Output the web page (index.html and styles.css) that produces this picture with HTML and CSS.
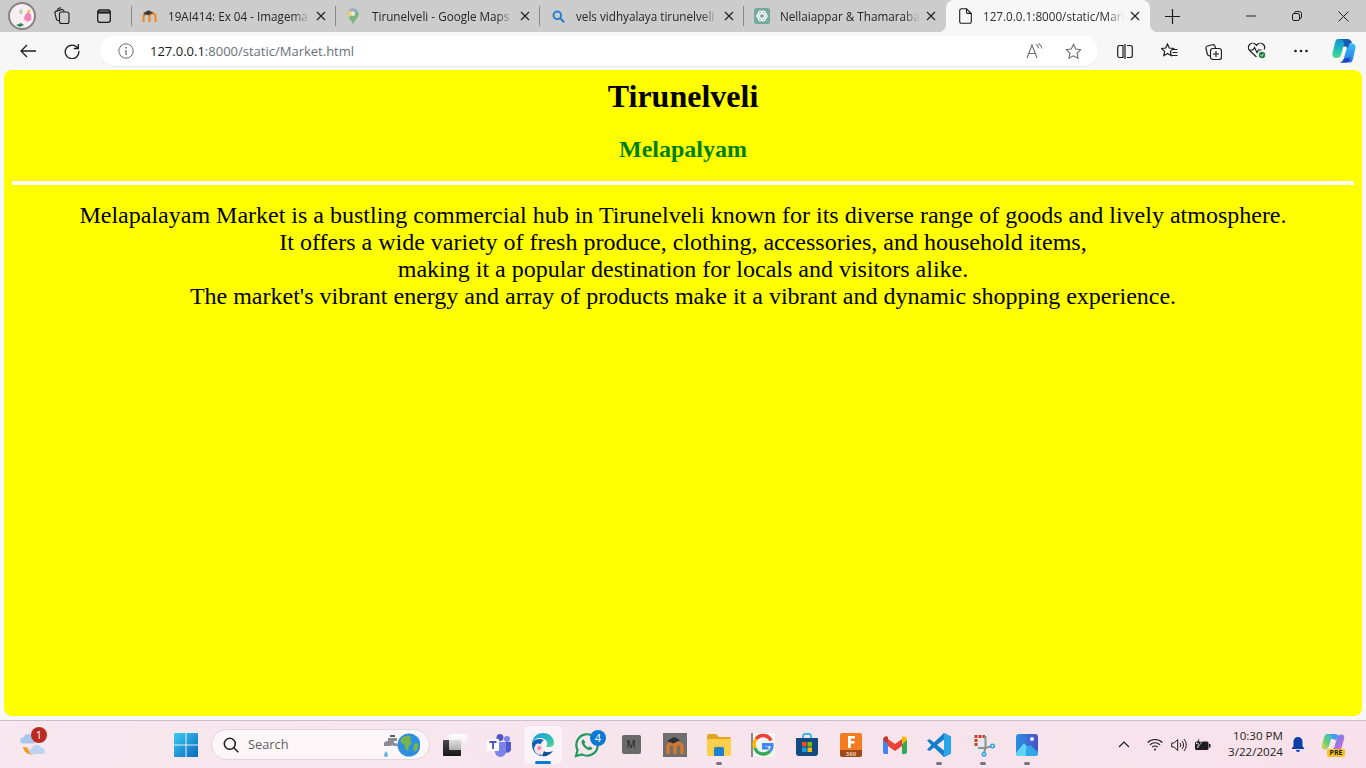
FILE: index.html
```html
<!DOCTYPE html>
<html lang="en">
<head>
<meta charset="utf-8">
<title>Market</title>
<link rel="stylesheet" href="styles.css">
</head>
<body>
<div class="tabstrip">
  <div class="profile">
    <svg width="28" height="28" viewBox="0 0 28 28"><circle cx="14" cy="14" r="13" fill="#fbeef2" stroke="#858585" stroke-width="2"/><path d="M13 6l2 4-2 3-2-3z" fill="#b9cdbb"/><path d="M20 10c3 1 4 5 3 8-2 2-5 2-7-1 0-3 2-6 4-7z" fill="#ef86b5"/><circle cx="21" cy="9" r="1.600" fill="#f4c14c"/><path d="M8 23l5-2 3 2-4 2z" fill="#2d8a52"/></svg>
  </div>
  <div class="strip-btn btn-workspaces">
    <svg width="18" height="18" viewBox="0 0 18 18" fill="none" stroke="#1c1c1c" stroke-width="1.100"><rect x="6.500" y="5" width="9.500" height="11.500" rx="2"/><path d="M6.500 13.500H5a2 2 0 0 1-1.600-1.400L2 6.500a2 2 0 0 1 1.400-2.400l5-1.500a2 2 0 0 1 2.400 1.200L11 5"/><path d="M5 3.800L4.600 3a1.500 1.500 0 0 1 1-1.600l2.600-.6"/></svg>
  </div>
  <div class="strip-btn btn-tabs">
    <svg width="16" height="16" viewBox="0 0 16 16" fill="none" stroke="#1c1c1c" stroke-width="1.300"><rect x="1.700" y="2" width="12.600" height="12.400" rx="2.400"/><path d="M1.700 4.500h12.600" stroke-width="2.200"/></svg>
  </div>
  <div class="tab first">
    <span class="fav"><svg width="17" height="14" viewBox="0 0 17 14"><path d="M1.500 13V7.500a3 3 0 0 1 6 0V13M7.500 13V7.500a3 3 0 0 1 6 0V13" fill="none" stroke="#f08a24" stroke-width="2.200"/><path d="M1 4.200l5.500-3 5 2.500-5.500 2.500z" fill="#3b3b3b"/><path d="M3 4.500v2" stroke="#555" stroke-width="1"/></svg></span>
    <span class="title">19AI414: Ex 04 - Imagema</span>
    <span class="close"><svg width="10" height="10" viewBox="0 0 10 10"><path d="M1 1l8 8M9 1L1 9" stroke="#222" stroke-width="1.200"/></svg></span>
  </div>
  <div class="tab">
    <span class="fav fav-maps"><svg width="12" height="17" viewBox="0 0 12 17"><path d="M6 .5a5.600 5.600 0 0 1 5.600 5.600c0 3.600-4 6-5.600 10.400C4.400 12.100.4 9.700.4 6.100A5.600 5.600 0 0 1 6 .5z" fill="#7db581"/><path d="M6 .5a5.600 5.600 0 0 1 4.300 2L1.700 9.500C.9 8.400.4 7.300.4 6.100A5.600 5.600 0 0 1 6 .5z" fill="#e8cf78"/><path d="M6 .5a5.600 5.600 0 0 1 4.300 2L8 4.500A2.400 2.400 0 0 0 4 3.400L2 1.900A5.600 5.600 0 0 1 6 .5z" fill="#86abe0"/><circle cx="6" cy="6" r="2.100" fill="#e9e9e9"/></svg></span>
    <span class="title">Tirunelveli - Google Maps</span>
    <span class="close"><svg width="10" height="10" viewBox="0 0 10 10"><path d="M1 1l8 8M9 1L1 9" stroke="#222" stroke-width="1.200"/></svg></span>
  </div>
  <div class="tab">
    <span class="fav"><svg width="13" height="13" viewBox="0 0 13 13" fill="none" stroke="#2a7fd0" stroke-width="2"><circle cx="5.300" cy="5.300" r="3.800"/><path d="M8.200 8.200l4 4"/></svg></span>
    <span class="title">vels vidhyalaya tirunelveli -</span>
    <span class="close"><svg width="10" height="10" viewBox="0 0 10 10"><path d="M1 1l8 8M9 1L1 9" stroke="#222" stroke-width="1.200"/></svg></span>
  </div>
  <div class="tab last">
    <span class="fav"><svg width="16" height="16" viewBox="0 0 16 16"><rect width="16" height="16" rx="2.500" fill="#74aa9c"/><g fill="none" stroke="#fff" stroke-width="1"><circle cx="8" cy="8" r="4.800"/><ellipse cx="8" cy="8" rx="5.400" ry="2.300" transform="rotate(60 8 8)"/><ellipse cx="8" cy="8" rx="5.400" ry="2.300" transform="rotate(-60 8 8)"/><ellipse cx="8" cy="8" rx="5.400" ry="2.300"/></g></svg></span>
    <span class="title">Nellaiappar &amp; Thamaraban</span>
    <span class="close"><svg width="10" height="10" viewBox="0 0 10 10"><path d="M1 1l8 8M9 1L1 9" stroke="#222" stroke-width="1.200"/></svg></span>
  </div>
  <div class="tab active">
    <span class="fav"><svg width="13" height="16" viewBox="0 0 13 16" fill="none" stroke="#1c1c1c" stroke-width="1.100"><path d="M2.500.8h5L12.300 5.500v8a1.800 1.800 0 0 1-1.800 1.800h-8A1.800 1.800 0 0 1 .7 13.500V2.600A1.800 1.800 0 0 1 2.500.8z"/><path d="M7.500.8v3.400a1.200 1.200 0 0 0 1.200 1.200h3.600"/></svg></span>
    <span class="title">127.0.0.1:8000/static/Mark</span>
    <span class="close"><svg width="10" height="10" viewBox="0 0 10 10"><path d="M1 1l8 8M9 1L1 9" stroke="#222" stroke-width="1.200"/></svg></span>
  </div>
  <div class="strip-btn btn-new">
    <svg width="15" height="15" viewBox="0 0 15 15"><path d="M7.500 0v15M0 7.500h15" stroke="#1c1c1c" stroke-width="1.200"/></svg>
  </div>
  <div class="window-controls">
    <span class="win-btn"><svg width="10" height="10" viewBox="0 0 10 10"><path d="M0 5h10" stroke="#222" stroke-width="1"/></svg></span>
    <span class="win-btn"><svg width="10" height="10" viewBox="0 0 10 10" fill="none" stroke="#222" stroke-width="1"><rect x=".5" y="2.500" width="7" height="7" rx="1.500"/><path d="M2.500 2.500V2A1.500 1.500 0 0 1 4 .5h3.500A2 2 0 0 1 9.500 2.500V6A1.500 1.500 0 0 1 8 7.500"/></svg></span>
    <span class="win-btn"><svg width="11" height="11" viewBox="0 0 11 11"><path d="M.5.500l10 10M10.500.500l-10 10" stroke="#222" stroke-width="1"/></svg></span>
  </div>
</div>

<div class="toolbar">
  <span class="nav-btn"><svg width="16" height="14" viewBox="0 0 16 14" fill="none" stroke="#1c1c1c" stroke-width="1.300"><path d="M16 7H1M7 1L1 7l6 6"/></svg></span>
  <span class="nav-btn"><svg width="16" height="16" viewBox="0 0 16 16" fill="none" stroke="#1c1c1c" stroke-width="1.300"><path d="M13.800 5.200A6.800 6.800 0 1 0 14.800 8"/><path d="M14.300 1v4.500H9.800"/></svg></span>
  <div class="address">
    <svg class="info" width="16" height="16" viewBox="0 0 16 16" fill="none" stroke="#6b6b6b" stroke-width="1"><circle cx="8" cy="8" r="7.200"/><path d="M8 7v5" stroke-width="1.300"/><circle cx="8" cy="4.700" r=".9" fill="#6b6b6b" stroke="none"/></svg>
    <span class="url"><span class="host">127.0.0.1</span>:8000/static/Market.html</span>
    <svg class="read" width="17" height="16" viewBox="0 0 17 16" fill="none" stroke="#6e6e6e" stroke-width="1.100"><path d="M1 15L6 2l5 13M3 10.500h6"/><path d="M10 1.500c1.500.8 2.400 2 2.600 3.800M12.500 .5c1.900 1.100 3.200 2.800 3.500 5"/></svg>
    <svg class="star" width="17" height="17" viewBox="0 0 17 17" fill="none" stroke="#6e6e6e" stroke-width="1.100"><path d="M8.500 1.300l2.200 4.700 5 .7-3.600 3.500.9 5.100-4.500-2.500L4 15.300l.9-5.100L1.300 6.700l5-.7z"/></svg>
  </div>
  <div class="tools">
    <span class="tool"><svg width="16" height="15" viewBox="0 0 16 15" fill="none" stroke="#1c1c1c" stroke-width="1.200"><path d="M6 1.500H2.500A1.800 1.800 0 0 0 .7 3.300v8.400a1.800 1.800 0 0 0 1.800 1.800H6zM10 1.500h3.500a1.800 1.800 0 0 1 1.800 1.800v8.400a1.800 1.800 0 0 1-1.800 1.800H10M8 0v15"/></svg></span>
    <span class="tool"><svg width="17" height="16" viewBox="0 0 17 16" fill="none" stroke="#1c1c1c" stroke-width="1.150"><path d="M6.500 1l1.800 4 4.200.5-3.100 2.900.8 4.300-3.700-2.200-3.700 2.200.8-4.300L.6 5.500 4.700 5z"/><path d="M11 6.500h5.500M11.500 9.500h5M10.500 12.500h6"/></svg></span>
    <span class="tool"><svg width="17" height="17" viewBox="0 0 17 17" fill="none" stroke="#1c1c1c" stroke-width="1.150"><rect x="5.500" y="5.500" width="11" height="11" rx="2.500"/><path d="M11 8v6M8 11h6"/><path d="M5 13c-1.500 0-2.400-.8-2.700-2L1 5.500A2 2 0 0 1 2.500 3l5-1.300a2 2 0 0 1 2.400 1.300L10.500 5"/></svg></span>
    <span class="tool"><svg width="20" height="18" viewBox="0 0 20 18" fill="none" stroke="#1c1c1c" stroke-width="1.100"><path d="M9.500 15L2.600 8.500a4.200 4.200 0 0 1 0-6 4.300 4.300 0 0 1 6 0l.9.900.9-.9a4.300 4.300 0 0 1 6 0 4.200 4.200 0 0 1 .8 5"/><path d="M2 8h4l1.500-2.500 2.500 5 1.500-2.500h3"/><circle cx="15" cy="13" r="3.800" fill="#1a7f37" stroke="#f7f7f7" stroke-width="1"/><path d="M13.300 13l1.200 1.200 2-2.200" stroke="#fff" stroke-width="1"/></svg></span>
    <span class="tool"><svg width="16" height="4" viewBox="0 0 16 4" fill="#1c1c1c"><circle cx="2.500" cy="2" r="1.300"/><circle cx="8" cy="2" r="1.300"/><circle cx="13.500" cy="2" r="1.300"/></svg></span>
    <span class="tool copilot"><svg width="24" height="24" viewBox="0 0 24 24"><defs><linearGradient id="cpa" x1="0" y1="0" x2="0" y2="1"><stop offset="0" stop-color="#1590d8"/><stop offset=".55" stop-color="#1fc0b4"/><stop offset="1" stop-color="#4bdc8c"/></linearGradient><linearGradient id="cpb" x1="0" y1="0" x2="0" y2="1"><stop offset="0" stop-color="#3cc0f4"/><stop offset=".7" stop-color="#2a8cec"/><stop offset="1" stop-color="#2a5fdc"/></linearGradient></defs><path d="M6 0h10c-3 1-3.500 3-4 5L9 16c-.5 2-2 3-4.500 3C1.500 19 0 17 .5 14L3 4C3.500 1.500 4.500 0 6 0z" fill="url(#cpa)"/><path d="M18 23.500H8c3-1 3.500-3 4-4.500L15 8c.5-2 2-3.500 4.500-3.500 3 0 4.500 2 4 4.500L21 19.500c-.5 2.500-1.500 4-3 4z" fill="url(#cpb)"/><path d="M6 0h9c3 0 4.500 2 5 4-2 0-3 1-3.500 3L16 10c-.5-2-2-2.500-3.500-2.500H11L12 5c.5-2.500-2-5-6-5z" fill="#155bb5"/><path d="M8 23.500h6c2 0 3-1 3.500-3L18 18c-1 1-2.500 1.500-4 1.500h-2c-.5 1.500-1 3-4 4z" fill="#1c3fc8"/></svg></span>
  </div>
</div>

<div class="content">
  <main class="page">
    <h1>Tirunelveli</h1>
    <h2>Melapalyam</h2>
    <hr>
    <p>Melapalayam Market is a bustling commercial hub in Tirunelveli known for its diverse range of goods and lively atmosphere.<br>It offers a wide variety of fresh produce, clothing, accessories, and household items,<br>making it a popular destination for locals and visitors alike.<br>The market's vibrant energy and array of products make it a vibrant and dynamic shopping experience.</p>
  </main>
</div>

<footer class="taskbar">
  <div class="weather">
    <svg width="26" height="26" viewBox="0 0 26 26"><path d="M3 15c1 7 9 10 15 5l-5 .5c-3 0-5-2-5.500-5z" fill="#f39a24"/><path d="M3 11.500a3 3 0 0 1 .5-6 5 5 0 0 1 9.500 0 3 3 0 0 1 0 6z" fill="#a9c7ec"/><path d="M12 22a2.800 2.800 0 0 1 0-5.600 5 5 0 0 1 9.400-.4 3 3 0 0 1 1 6z" fill="#bcd4f0"/></svg>
    <span class="badge badge-red">1</span>
  </div>
  <div class="task-center">
    <span class="slot"><svg width="24" height="24" viewBox="0 0 24 24"><defs><linearGradient id="wn" x1="0" y1="0" x2="1" y2="1"><stop offset="0" stop-color="#3ccbf4"/><stop offset="1" stop-color="#0669bc"/></linearGradient></defs><path d="M0 1a1 1 0 0 1 1-1h10.500v11.500H0zM12.500 0H23a1 1 0 0 1 1 1v10.500H12.500zM0 12.500h11.500V24H1a1 1 0 0 1-1-1zM12.500 12.500H24V23a1 1 0 0 1-1 1H12.500z" fill="url(#wn)"/></svg></span>
    <div class="search">
      <svg width="16" height="16" viewBox="0 0 16 16" fill="none" stroke="#1c1c1c" stroke-width="1.500"><circle cx="6.800" cy="6.800" r="5.500"/><path d="M10.800 10.800l4.500 4.500"/></svg>
      <span class="search-text">Search</span>
      <svg class="search-art" width="38" height="26" viewBox="0 0 38 26"><path d="M6 6h9v3h-3v2c3 0 4 1 4 3h-4c-1-1-3-1-4 0H2v-3c0-1 2-2 4-2z" fill="#8b8b93"/><path d="M8 3h5v2H8z" fill="#5b5b63"/><path d="M4 19c1 2 2 3 2 4a2 2 0 0 1-4 0c0-1 1-2 2-4z" fill="#62b1ef"/><circle cx="27" cy="13" r="11.500" fill="#2d8fe0"/><path d="M21 5c3-2 6-2 8 0l-1 3 2 3-3 3-1 5-3-2v-4l-4-2c-1-3 0-5 2-6zM32 12l4-1c1 4-1 7-3 9l-2-3z" fill="#79b34e"/></svg>
    </div>
    <span class="slot"><svg width="24" height="22" viewBox="0 0 24 22"><defs><linearGradient id="tvd" x1="0" y1="0" x2="0" y2="1"><stop offset="0" stop-color="#4a4a4a"/><stop offset="1" stop-color="#161616"/></linearGradient><linearGradient id="tvl" x1="0" y1="0" x2="0" y2="1"><stop offset="0" stop-color="#ffffff" stop-opacity=".95"/><stop offset="1" stop-color="#e4e4e4" stop-opacity=".72"/></linearGradient></defs><rect x="0" y="6" width="18" height="16" rx="1" fill="url(#tvd)"/><rect x="6" y="0" width="18" height="16" rx="1" fill="url(#tvl)"/></svg></span>
    <span class="slot"><svg width="26" height="24" viewBox="0 0 26 24"><circle cx="21" cy="6" r="3" fill="#7b83eb"/><circle cx="14" cy="4.500" r="3.500" fill="#5059c9"/><path d="M17 9h8v8a4 4 0 0 1-6 2z" fill="#5059c9"/><path d="M8 9h12v9a5.500 5.500 0 0 1-11 1z" fill="#7b83eb"/><rect x="1" y="6" width="12" height="12" rx="1" fill="#fbfbfe"/><path d="M3.500 9h7M7 9v7" stroke="#4b53bc" stroke-width="1.800"/></svg></span>
    <span class="slot slot-active"><svg width="24" height="25" viewBox="0 0 24 25"><defs><linearGradient id="eg" x1="0" y1="0" x2="1" y2="1"><stop offset="0" stop-color="#1b9de2"/><stop offset=".7" stop-color="#35c1b0"/><stop offset="1" stop-color="#5be08a"/></linearGradient></defs><path d="M1 11C2 4 7 1 12 1c6 0 11 4 11 10 0 3-2 4-5 4h-3c2-2 2-7-3-8.500C7 5 3 7 1 11z" fill="url(#eg)"/><path d="M1 11C.5 18 5 24 11 24c-2-2-3-5-2-9 .5-3 2-6 4-7-5-2-10-.5-12 3z" fill="#0c62b5"/><path d="M5 12c2-1 6-1 7 3 1 4-1 7-4 8-3-1-5-4-5-7z" fill="#f8dfe7"/><path d="M7 15c1-1 2-1 3 0 0 2-1 3-2 3s-2-1-1-3z" fill="#ee7fa9"/><path d="M11 24c4 1 8-1 11-5-3 1-7 2-9 0z" fill="#0b4f94"/></svg><span class="active-bar"></span></span>
    <span class="slot whatsapp"><svg width="26" height="26" viewBox="0 0 26 26" fill="none"><path d="M2 24l1.600-6A10.700 10.700 0 1 1 8 22.400z" stroke="#1f9a5c" stroke-width="2.200" fill="#f7e6ee"/><path d="M9 7.500c-1.500 1-2 2.500-1 4.500 1.500 3 3.500 5 6.500 6 2 .5 3.500-.3 4-2l-3-1.700-1.200 1.300c-1.700-.8-3-2-4-4l1.200-1.200L9.500 7.500z" fill="#1f9a5c"/></svg><span class="badge badge-blue">4</span></span>
    <span class="slot"><span class="m-icon">M</span></span>
    <span class="slot"><svg width="24" height="24" viewBox="0 0 24 24"><rect width="24" height="24" fill="#6f6f6f"/><path d="M5 21v-9M12 21v-7a3.500 3.500 0 0 1 7 0v7M5 14a3.500 3.500 0 0 1 7 0" fill="none" stroke="#d9772a" stroke-width="3.400"/><path d="M4 8l7-4 6 3-7 3.500z" fill="#2f2f2f"/></svg></span>
    <span class="slot"><svg width="24" height="22" viewBox="0 0 24 22"><path d="M0 2a2 2 0 0 1 2-2h7l3 3h10a2 2 0 0 1 2 2v3H0z" fill="#e3a51f"/><path d="M0 5h24v15a2 2 0 0 1-2 2H2a2 2 0 0 1-2-2z" fill="#fbcf4c"/><path d="M7 15a2 2 0 0 1 2-2h6a2 2 0 0 1 2 2v7H7z" fill="#1a80d0"/></svg><span class="dot"></span></span>
    <span class="slot"><svg width="24" height="24" viewBox="0 0 24 24"><rect width="24" height="24" fill="#8a8a8a"/><rect x="2" y="0" width="22" height="24" fill="#f4f4f4"/><path d="M20 7.500A8.800 8.800 0 0 0 5 6" fill="none" stroke="#ea4335" stroke-width="3.400"/><path d="M5 6a8.800 8.800 0 0 0-1 9" fill="none" stroke="#fbbc05" stroke-width="3.400"/><path d="M4 15a8.800 8.800 0 0 0 15 3" fill="none" stroke="#34a853" stroke-width="3.400"/><path d="M19 18c2-2 2.500-4 2-6.500H12.500v3.400h5" fill="none" stroke="#4285f4" stroke-width="3"/></svg></span>
    <span class="slot"><svg width="24" height="24" viewBox="0 0 24 24"><path d="M8 5V3a2 2 0 0 1 2-2h4a2 2 0 0 1 2 2v2" fill="none" stroke="#33b6e8" stroke-width="1.800"/><path d="M1 5h22v15a3 3 0 0 1-3 3H4a3 3 0 0 1-3-3z" fill="#124a82"/><path d="M7 9h4.500v4.500H7z" fill="#f25022"/><path d="M12.500 9H17v4.500h-4.500z" fill="#7fba00"/><path d="M7 14.500h4.500V19H7z" fill="#00a4ef"/><path d="M12.500 14.500H17V19h-4.500z" fill="#ffb900"/></svg></span>
    <span class="slot"><svg width="22" height="24" viewBox="0 0 22 24"><path d="M2 0h18a2 2 0 0 1 2 2v15H0V2a2 2 0 0 1 2-2z" fill="#f47b20"/><path d="M0 17h22v5a2 2 0 0 1-2 2H2a2 2 0 0 1-2-2z" fill="#9c4a17"/><path d="M8 3h7v2.500h-4.200v2.500h3.600v2.400h-3.600V15H8z" fill="#fff"/><text x="11" y="22.600" text-anchor="middle" class="f-label">360</text></svg></span>
    <span class="slot"><svg width="24" height="18" viewBox="0 0 24 18"><path d="M0 3v13a2 2 0 0 0 2 2h3V8z" fill="#4285f4"/><path d="M24 3v13a2 2 0 0 1-2 2h-3V8z" fill="#34a853"/><path d="M5 3v7l7 5 7-5V3l-7 5z" fill="#ea4335"/><path d="M0 4c0-3 3-5 5-3v7z" fill="#c5382c"/><path d="M19 1c2-2 5 0 5 3l-5 4z" fill="#fbbc05"/></svg></span>
    <span class="slot"><svg width="24" height="24" viewBox="0 0 24 24"><path d="M17 0l7 3.500v17L17 24 7 14.500 2.500 18 0 16.500 4.500 12 0 7.500 2.500 6 7 9.500z" fill="#0f7fcb"/><path d="M17 6.500L10 12l7 5.500z" fill="#f7e6ee"/><path d="M17 0l7 3.500v17L17 24z" fill="#27a6ea"/></svg><span class="dot"></span></span>
    <span class="slot"><svg width="24" height="24" viewBox="0 0 24 24"><rect x="1" y="0" width="17" height="18" rx="2" fill="#e6e9e9"/><path d="M3.500 2h3v3h-3zM7.500 2h3v3h-3zM11.500 2h2.500v3h-2.500zM3.500 6h3v3h-3zM3.500 10h3v3h-3z" fill="#cf3a2a"/><path d="M14.500 3v12M7 15h7.500L21 13M14.500 15L13 20" fill="none" stroke="#8e9292" stroke-width="2"/><circle cx="21.500" cy="13" r="2.500" fill="#2a9fe0"/><circle cx="13" cy="21.200" r="2.500" fill="#2a9fe0"/><path d="M20.300 13h2.400M21.500 11.800v2.400M11.800 21.200h2.400M13 20v2.400" stroke="#fff" stroke-width=".7"/></svg><span class="dot"></span></span>
    <span class="slot"><svg width="22" height="22" viewBox="0 0 22 22"><defs><linearGradient id="ph" x1="0" y1="0" x2="1" y2="0"><stop offset="0" stop-color="#2b8fe3"/><stop offset="1" stop-color="#4b4fc4"/></linearGradient></defs><rect width="22" height="22" rx="3" fill="url(#ph)"/><circle cx="16" cy="5" r="2" fill="#dfeeff"/><path d="M0 19l8-10 7 8-5 5H3a3 3 0 0 1-3-3z" fill="#5fd3f3"/><path d="M10 14l4-3 8 7v1a3 3 0 0 1-3 3h-9z" fill="#2fa7e8"/></svg><span class="dot"></span></span>
  </div>
  <div class="tray">
    <svg class="tray-chev" width="12" height="7" viewBox="0 0 12 7" fill="none" stroke="#1c1c1c" stroke-width="1.200"><path d="M1 6l5-5 5 5"/></svg>
    <svg class="tray-wifi" width="16" height="13" viewBox="0 0 16 13" fill="none" stroke="#1c1c1c" stroke-width="1.100"><path d="M.6 4.500a10.500 10.500 0 0 1 14.800 0M2.900 6.900a7.200 7.200 0 0 1 10.200 0M5.200 9.200a3.900 3.900 0 0 1 5.600 0"/><circle cx="8" cy="11.500" r="1" fill="#1c1c1c" stroke="none"/></svg>
    <svg class="tray-vol" width="16" height="14" viewBox="0 0 16 14" fill="none" stroke="#1c1c1c" stroke-width="1"><path d="M.7 5h2.500l3.500-3.500v11L3.200 9H.7zM9 5a3 3 0 0 1 0 4M11 3a6 6 0 0 1 0 8M13 1a9 9 0 0 1 0 12"/></svg>
    <svg class="tray-bat" width="17" height="13" viewBox="0 0 17 13"><rect x="1" y="3.500" width="13.500" height="8.500" rx="1.500" fill="#1c1c1c"/><rect x="15" y="6" width="1.500" height="3.500" fill="#1c1c1c"/><path d="M5 0L2 5.500h2.500L3.500 10 8 3.500H5.500z" fill="#1c1c1c" stroke="#f7e6ee" stroke-width=".7"/></svg>
    <div class="clock"><span>10:30 PM</span><span>3/22/2024</span></div>
    <svg class="tray-bell" width="14" height="15" viewBox="0 0 14 15"><path d="M7 0a4.500 4.500 0 0 1 4.500 4.500V9l2 3H.5l2-3V4.500A4.500 4.500 0 0 1 7 0zM5 13h4a2 2 0 0 1-4 0z" fill="#0a3fa8"/></svg>
    <span class="tray-copilot"><svg width="24" height="18" viewBox="0 0 24 18"><defs><linearGradient id="cql" x1="0" y1="1" x2="1" y2="0"><stop offset="0" stop-color="#f0d24a"/><stop offset=".45" stop-color="#5ecf7a"/><stop offset="1" stop-color="#2fb5e8"/></linearGradient><linearGradient id="cqr" x1="0" y1="0" x2="1" y2="1"><stop offset="0" stop-color="#3d8de6"/><stop offset=".6" stop-color="#a874e0"/><stop offset="1" stop-color="#ea6fc0"/></linearGradient></defs><path d="M6 1h8c-2 .5-3 2-3.500 3.500L8 13c-.6 2-2 3.500-4 3.500-2.500 0-3.800-2-3.200-4L3 4.500C3.500 2.500 4.500 1 6 1z" fill="url(#cql)"/><path d="M18 17h-8c2-.5 3-2 3.500-3.500L16 5c.6-2 2-3.500 4-3.500 2.500 0 3.800 2 3.200 4L21 13.500c-.5 2-1.500 3.500-3 3.500z" fill="url(#cqr)"/><path d="M6 1h8c2 0 3 .8 3.500 2.200-1 .5-1.500 1.200-1.800 2.300l-.7 2.500c-.5-1.300-1.500-2-3-2h-2l.8-2.500C11 2.300 10 1.500 6 1z" fill="#3f9cec"/></svg><span class="pre">PRE</span></span>
  </div>
</footer>
</body>
</html>
```

FILE: styles.css
```css
* { box-sizing: border-box; }
html, body { margin: 0; height: 768px; overflow: hidden; }
body { display: flex; flex-direction: column; font-family: "Open Sans", "Noto Sans", sans-serif; color: #1c1c1c; background: #f7f7f7; }
svg { display: block; flex: none; }

.tabstrip { height: 32px; flex: none; display: flex; align-items: center; background: #cccccc; }
.profile { width: 28px; height: 28px; margin-left: 8px; }
.strip-btn { display: flex; align-items: center; justify-content: center; flex: none; }
.btn-workspaces { width: 18px; margin-left: 17px; }
.btn-tabs { width: 16px; margin-left: 25px; margin-right: 20px; }
.tab { width: 204px; height: 32px; flex: none; display: flex; align-items: center; padding-left: 10px; padding-right: 7px; position: relative; }
.tab::after { content: ""; position: absolute; right: 0; top: 6px; height: 20px; width: 1px; background: #8a8a8a; }
.tab.first::before { content: ""; position: absolute; left: -1px; top: 6px; height: 20px; width: 1px; background: #8a8a8a; }
.tab.last { width: 202px; }
.tab.last::after { display: none; }
.fav { width: 16px; height: 18px; display: flex; align-items: center; justify-content: center; flex: none; margin-right: 10px; }
.fav-maps { justify-content: flex-start; padding-left: 1px; }
.title { flex: 1; min-width: 0; white-space: nowrap; font-size: 11.700px; line-height: 16px; color: #262626; -webkit-mask-image: linear-gradient(to right, #000 86%, transparent 98%); mask-image: linear-gradient(to right, #000 86%, transparent 98%); }
.close { width: 16px; height: 16px; display: flex; align-items: center; justify-content: center; flex: none; }
.tab.active { background: #f7f7f7; border-radius: 8px 8px 0 0; width: 204px; padding-left: 11px; }
.tab.active::before, .tab.active::after { content: ""; position: absolute; bottom: 0; top: auto; width: 8px; height: 8px; }
.tab.active::before { left: -8px; background: radial-gradient(circle at 0 0, transparent 8px, #f7f7f7 8.500px); }
.tab.active::after { right: -8px; background: radial-gradient(circle at 100% 0, transparent 8px, #f7f7f7 8.500px); }
.tab.active .title { color: #2e2e2e; }
.btn-new { width: 15px; margin-left: 15px; }
.window-controls { margin-left: auto; display: flex; align-items: center; }
.win-btn { width: 46px; height: 32px; display: flex; align-items: center; justify-content: center; }

.toolbar { height: 38px; flex: none; display: flex; align-items: center; background: #f7f7f7; padding-left: 6px; }
.nav-btn { width: 44px; height: 30px; display: flex; align-items: center; justify-content: center; flex: none; }
.address { width: 998px; height: 30px; margin-left: 6px; background: #fff; border-radius: 15px; display: flex; align-items: center; padding-left: 18px; padding-right: 16px; box-shadow: 0 1px 1px rgba(0,0,0,.06); flex: none; }
.url { margin-left: 16px; font-size: 13px; color: #6a6f78; white-space: nowrap; }
.host { color: #1a1a1a; }
.read { margin-left: auto; }
.star { margin-left: 22px; }
.tools { display: flex; align-items: center; margin-left: 5px; }
.tool { width: 44px; height: 30px; display: flex; align-items: center; justify-content: center; flex: none; }
.tool.copilot { width: 40px; margin-left: 1px; }

.content { flex: 1; min-height: 0; padding: 0 4px 4px; background: #f7f7f7; }
.page { height: 100%; padding: 8px; background: #ffff00; border-radius: 8px; text-align: center; font-family: "Liberation Serif", "Times New Roman", serif; color: #000; }
.page h1 { margin: 0 0 21px; font-size: 32px; line-height: 37px; font-weight: 700; }
.page h2 { margin: 0 0 18px; font-size: 24px; line-height: 27px; font-weight: 700; color: #008000; }
.page hr { margin: 0 0 17px; height: 4px; border: 0; background: #fff; }
.page p { margin: 0; font-size: 24px; line-height: 27px; }

.taskbar { height: 48px; flex: none; display: flex; align-items: center; background: linear-gradient(90deg, #f6e8ee, #f8e1ea); border-top: 1px solid #cdbfc5; position: relative; }
.weather { width: 26px; height: 26px; margin-left: 20px; position: relative; flex: none; }
.badge { position: absolute; border-radius: 50%; color: #fff; font-size: 11px; line-height: 16px; width: 16px; height: 16px; text-align: center; font-family: "Open Sans", sans-serif; }
.badge-red { background: #bb2a20; top: -5px; right: -1px; }
.badge-blue { background: #0a78d4; top: 5px; right: 3px; }
.task-center { display: flex; align-items: center; margin-left: 118px; flex: none; }
.slot { width: 44px; height: 40px; display: flex; align-items: center; justify-content: center; position: relative; flex: none; }
.slot-active { background: #fbf3f7; border-radius: 4px; width: 38px; margin: 0 3px; height: 38px; box-shadow: 0 0 1px rgba(0,0,0,.1); }
.active-bar { position: absolute; left: 11px; bottom: 0; width: 16px; height: 3px; border-radius: 2px; background: #0a78d4; }
.dot { position: absolute; left: 19px; bottom: 0; width: 6px; height: 3px; border-radius: 2px; background: #7a7478; }
.search { width: 219px; height: 31px; margin: 0 3px 0 3px; display: flex; align-items: center; padding-left: 11px; padding-right: 9px; border-radius: 16px; background: #fdf6f9; border: 1px solid #e2d5db; flex: none; }
.search-text { margin-left: 9px; margin-top: -2px; font-size: 12.800px; color: #5d5d5d; }
.search-art { margin-left: auto; }
.m-icon { width: 19px; height: 19px; background: #6a6a6a; border-radius: 2px; color: #1c1c1c; font-size: 10px; line-height: 19px; text-align: center; }
.f-label { font-family: "Open Sans", sans-serif; font-size: 6px; font-weight: 700; fill: #f0c6a8; }
.tray { margin-left: auto; display: flex; align-items: center; flex: none; padding-right: 21px; }
.tray-wifi { margin-left: 17px; }
.tray-vol { margin-left: 8px; }
.tray-bat { margin-left: 7px; }
.clock { width: 72px; display: flex; flex-direction: column; align-items: flex-end; font-size: 11.600px; line-height: 16px; color: #222; margin-top: -2px; }
.tray-bell { margin-left: 8px; }
.tray-copilot { position: relative; width: 24px; height: 24px; margin-left: 16px; }
.pre { position: absolute; left: 6px; bottom: 0; width: 18px; height: 8px; background: #f6c21c; border-radius: 2px; color: #222; font-size: 7px; line-height: 8px; font-weight: 700; text-align: center; }
```
